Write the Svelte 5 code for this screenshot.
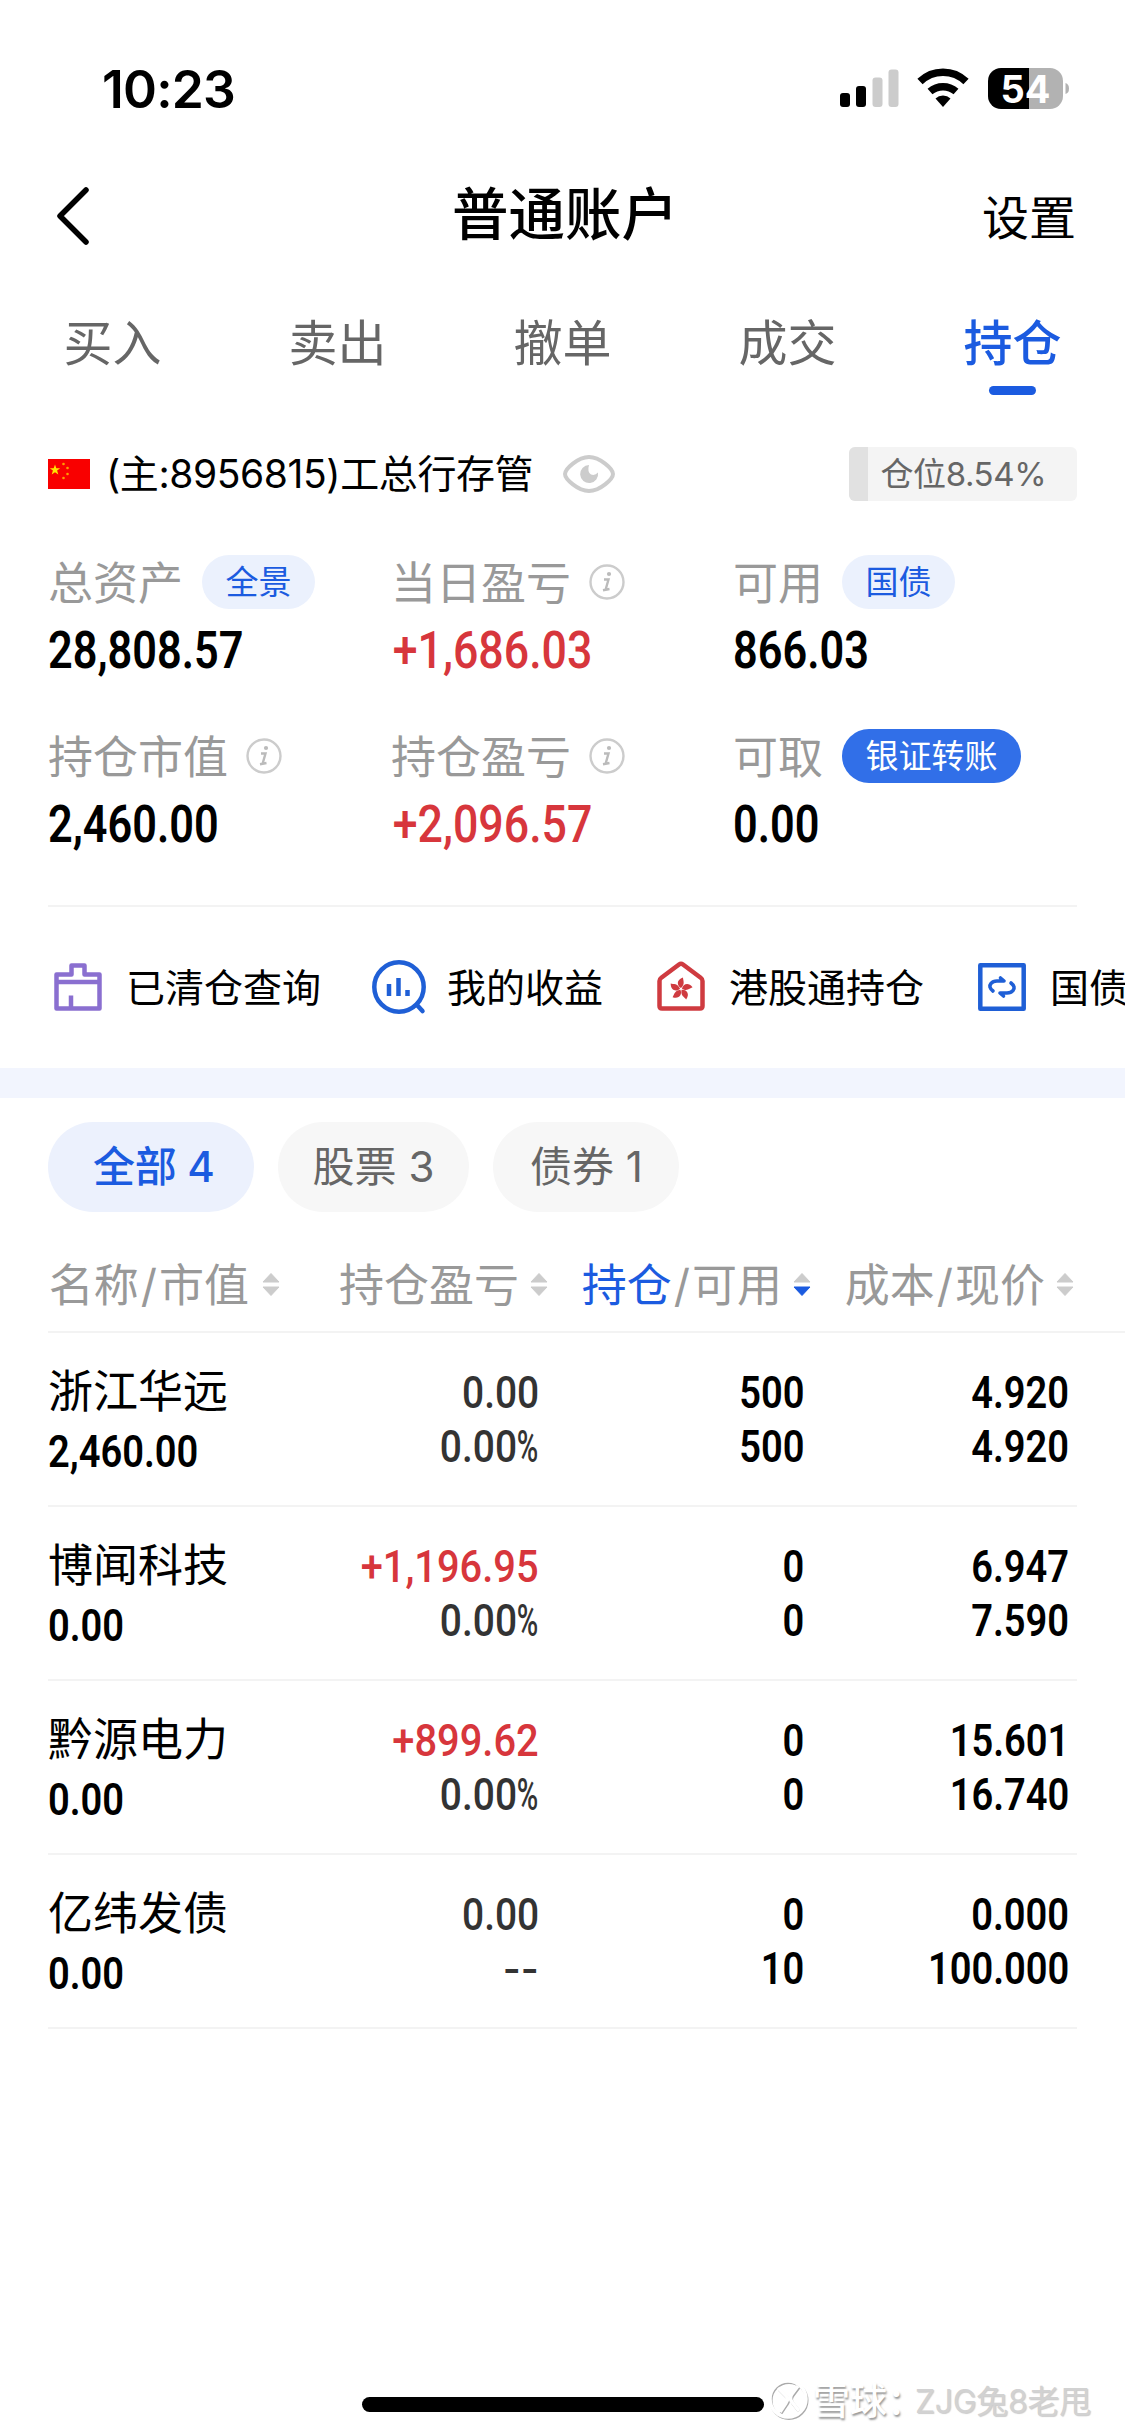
<style>
:global(body) {
	background: #fff;
}

.page {
	position: relative;
	display: flex;
	flex-direction: column;
	width: 1125px;
	height: 2436px;
	overflow: hidden;
	background: #fff;
	color: #000;
	font-family: Inter, "Noto Sans CJK SC", sans-serif;
	font-size: 45px;
	white-space: nowrap;
}

svg {
	display: block;
	flex: none;
}

.status {
	display: flex;
	align-items: center;
	height: 86px;
	padding: 46px 56px 0 102px;
}

.status svg {
	margin-top: 2px;
}

.time {
	flex: 1;
	font-size: 51.5px;
	font-weight: 600;
	letter-spacing: -0.8px;
}

.nav {
	display: grid;
	grid-template-columns: 1fr auto 1fr;
	align-items: center;
	height: 170px;
	padding: 0 49px 0 54px;
}

.nav svg {
	margin-bottom: 2px;
}

.nav h1 {
	margin: 0;
	padding-bottom: 5px;
	font-size: 56.5px;
	font-weight: 500;
	line-height: 80px;
}

.settings {
	padding-bottom: 5px;
	font-size: 47px;
	text-align: right;
}

.tabs {
	display: flex;
	height: 118px;
}

.tab {
	display: flex;
	flex: 1;
	flex-direction: column;
	align-items: center;
	color: #666;
	font-size: 49px;
	line-height: 84px;
}

.tab.active {
	color: #1b5be0;
	font-weight: 500;
}

.tab.active::after {
	content: '';
	width: 47px;
	height: 9px;
	border-radius: 5px;
	background: #1b5be0;
}

.account {
	display: flex;
	align-items: center;
	height: 108px;
	padding: 0 48px;
}

.account-name {
	flex: 1;
	display: flex;
	align-items: center;
	gap: 29px;
	margin-left: 16px;
	font-size: 39px;
	letter-spacing: -0.4px;
}

.account-name span {
	padding-bottom: 6px;
}

.position {
	display: flex;
	width: 228px;
	height: 54px;
	border-radius: 6px;
	overflow: hidden;
	background: #f4f4f4;
	color: #666;
	font-size: 33px;
	line-height: 54px;
	letter-spacing: -0.4px;
}

.position i {
	margin-right: 12px;
	background: #e1e1e1;
}

.stats {
	display: grid;
	grid-template-columns: 343px 342px 1fr;
	margin: 27px 48px 0;
	padding-bottom: 2px;
	border-bottom: 2px solid #f3f3f3;
}

.stat {
	height: 174px;
}

.label {
	display: flex;
	align-items: center;
	height: 54px;
	color: #999;
}

.label span:first-child {
	padding-bottom: 4px;
}

.label svg {
	margin-left: 18px;
}

.pill {
	height: 54px;
	margin-left: 19px;
	padding: 0 23.5px;
	border-radius: 27px;
	background: #ebf1fd;
	color: #1b5be0;
	font-size: 33px;
	line-height: 54px;
}

.pill.solid {
	background: #316fe8;
	color: #fff;
}

.num {
	display: block;
	width: max-content;
	font-family: Roboto, sans-serif;
	font-size: 44px;
	font-weight: 600;
	line-height: 56px;
	transform: scaleX(0.865);
	transform-origin: left;
}

.stat .num {
	font-size: 51.5px;
	line-height: 83px;
	transform: scaleX(0.84);
}

.red {
	color: #d7363c;
	font-weight: 500;
}

.stat .red {
	padding-left: 2px;
	transform: scaleX(0.868);
}

.percent {
	display: inline-block;
	margin-right: -8px;
	transform: scaleX(0.75);
	transform-origin: left;
}

.links {
	display: flex;
	align-items: center;
	gap: 48px;
	height: 161px;
	padding-left: 48px;
	font-size: 39px;
}

.link {
	display: flex;
	align-items: center;
	gap: 18px;
}

.link svg {
	margin-bottom: 1px;
}

.link span {
	padding-bottom: 6px;
}

.band {
	height: 30px;
	background: #f2f5fe;
}

.chips {
	display: flex;
	gap: 24px;
	padding: 24px 48px 0;
}

.chip {
	box-sizing: border-box;
	min-width: 186px;
	height: 90px;
	padding: 0 35px;
	border-radius: 45px;
	background: #f7f7f7;
	color: #666;
	font-size: 42px;
	line-height: 90px;
	text-align: center;
}

.chip.active {
	padding: 0 39px 0 45px;
	background: #ecf1fd;
	color: #1b5be0;
	font-weight: 500;
	letter-spacing: -0.3px;
}

.row {
	display: grid;
	grid-template-columns: 232px 268px 263px 263px;
}

.head {
	height: 93px;
	margin-left: 48px;
	padding-top: 26px;
	border-bottom: 2px solid #f3f3f3;
	color: #999;
}

.head div {
	display: flex;
	align-items: center;
	justify-content: flex-end;
	height: 94px;
}

.head span {
	padding-bottom: 5px;
}

.head svg {
	margin: 0 -1px 0 10px;
}

.head div:first-child svg {
	margin-left: 12px;
}

.head b {
	color: #1b5be0;
	font-weight: 400;
}

.head i {
	margin: 0 2px;
	font-style: normal;
}

.holding {
	height: 140px;
	margin: 0 48px;
	padding-top: 32px;
	border-bottom: 2px solid #f3f3f3;
}

.name {
	height: 59px;
	line-height: 54px;
}

.cell {
	display: flex;
	flex-direction: column;
	align-items: flex-end;
	padding-right: 5px;
}

.cell .num {
	height: 54px;
	transform-origin: right;
}

.cell.profit {
	padding-right: 9px;
	color: #333;
}

.cell.profit .num {
	font-weight: 500;
	transform: scaleX(0.885);
}

.cell.profit .red {
	transform: scaleX(0.905);
}

.cell.amount {
	padding-right: 7px;
}

.profit .none {
	font-family: Inter, sans-serif;
}

.home {
	width: 402px;
	height: 15px;
	margin: auto auto 24px 362px;
	border-radius: 8px;
	background: #000;
}

.watermark {
	position: absolute;
	left: 767px;
	top: 2376px;
	display: flex;
	align-items: center;
	height: 46px;
	color: #fff;
	font-size: 37px;
	font-weight: 500;
	text-shadow: 1px 2px 2px #999;
}

.watermark span {
	width: 102px;
	margin-left: 2px;
}

.watermark small {
	color: #d2d2d2;
	font-size: 32px;
	font-weight: 400;
	text-shadow: 1px 1px 1px #ccc;
	letter-spacing: -0.3px;
}
</style>

<script>
  const tabs = ['买入', '卖出', '撤单', '成交', '持仓']
  const stats = [
    { label: '总资产', pill: '全景', value: '28,808.57' },
    { label: '当日盈亏', info: true, value: '+1,686.03' },
    { label: '可用', pill: '国债', value: '866.03' },
    { label: '持仓市值', info: true, value: '2,460.00' },
    { label: '持仓盈亏', info: true, value: '+2,096.57' },
    { label: '可取', pill: '银证转账', solid: true, value: '0.00' }
  ]
  const chips = ['全部 4', '股票 3', '债券 1']
  const holdings = [
    { name: '浙江华远', value: '2,460.00', profit: '0.00', rate: '0.00', held: '500', usable: '500', cost: '4.920', price: '4.920' },
    { name: '博闻科技', value: '0.00', profit: '+1,196.95', rate: '0.00', held: '0', usable: '0', cost: '6.947', price: '7.590' },
    { name: '黔源电力', value: '0.00', profit: '+899.62', rate: '0.00', held: '0', usable: '0', cost: '15.601', price: '16.740' },
    { name: '亿纬发债', value: '0.00', profit: '0.00', rate: null, held: '0', usable: '10', cost: '0.000', price: '100.000' }
  ]
  const position = 8.54

  let tab = '持仓'
  let chip = '全部 4'
</script>

{#snippet sort(down)}
  <svg width="20" height="26" viewBox="0 0 20 26">
    <path d="M10 1.500 18 10H2Z" fill="#ccc" stroke="#ccc" stroke-linejoin="round" />
    <path d="M10 23.500 18 15H2Z" fill={down ? '#1b5be0' : '#ccc'} stroke={down ? '#1b5be0' : '#ccc'} stroke-linejoin="round" />
  </svg>
{/snippet}

<div class="page">
  <div class="status">
    <span class="time">10:23</span>
    <svg width="230" height="44" viewBox="0 0 230 44">
      <rect x="1" y="25" width="10" height="14" rx="3" />
      <rect x="17" y="18" width="10" height="21" rx="3" />
      <rect x="33.500" y="9.500" width="10" height="29.500" rx="3" fill="#ccc" />
      <rect x="49.500" y="1.500" width="10" height="37.500" rx="3" fill="#ccc" />
      <g fill="none" stroke="#000" stroke-width="7.500">
        <path d="M81 13.500A33 33 0 0 1 127 13.500" />
        <path d="M91 23.500A20 20 0 0 1 117 23.500" />
      </g>
      <path d="M96.500 30.500A11 11 0 0 1 111.500 30.500L104 39Z" />
      <path d="M190 0H211A13 13 0 0 1 224 13V28A13 13 0 0 1 211 41H190Z" fill="#b2b2b2" />
      <path d="M190 0H162A13 13 0 0 0 149 13V28A13 13 0 0 0 162 41H190Z" />
      <path d="M226.500 15Q230 16 230 20.500T226.500 26Z" fill="#b2b2b2" />
      <text x="186.500" y="34.500" fill="#fff" font-size="38" font-weight="700" text-anchor="middle">54</text>
    </svg>
  </div>

  <div class="nav">
    <svg width="36" height="60" viewBox="0 0 36 60">
      <path d="M32 4 6 30 32 56" fill="none" stroke="#000" stroke-width="5.500" stroke-linecap="round" stroke-linejoin="round" />
    </svg>
    <h1>普通账户</h1>
    <span class="settings">设置</span>
  </div>

  <div class="tabs">
    {#each tabs as name}
      <div class="tab {tab === name ? 'active' : ''}">{name}</div>
    {/each}
  </div>

  <div class="account">
    <svg width="42" height="30" viewBox="0 0 42 30">
      <path d="M0 0H42V30H0Z" fill="#f90000" />
      <path d="M7 5.500 8.300 9.300H12.200L9.100 11.600 10.300 15.500 7 13.200 3.700 15.500 4.900 11.600 1.800 9.300H5.700Z" fill="#ffe600" />
      <g fill="#ff9c00">
        <circle cx="15.500" cy="5" r="1.300" />
        <circle cx="19.500" cy="9" r="1.300" />
        <circle cx="19.500" cy="15" r="1.300" />
        <circle cx="15.500" cy="19" r="1.300" />
      </g>
    </svg>
    <div class="account-name">
      <span>(主:8956815)工总行存管</span>
      <svg width="54" height="40" viewBox="0 0 54 40">
        <path d="M3 20C3 15 16 3 27 3S51 15 51 20 38 37 27 37 3 25 3 20Z" fill="none" stroke="#ccc" stroke-width="4" />
        <path d="M27 11Q25 18 29 20.500 33 22 36 18.500A9 9 0 1 1 27 11Z" fill="#ccc" />
      </svg>
    </div>
    <div class="position"><i style="width: {position}%"></i>仓位{position}%</div>
  </div>

  <div class="stats">
    {#each stats as s}
      <div class="stat">
        <div class="label">
          <span>{s.label}</span>
          {#if s.pill}
            <span class="pill {s.solid ? 'solid' : ''}">{s.pill}</span>
          {/if}
          {#if s.info}
            <svg width="36" height="36" viewBox="0 0 36 36">
              <circle cx="18" cy="18" r="16.500" fill="none" stroke="#ccc" stroke-width="2.400" />
              <circle cx="20" cy="10" r="2.100" fill="#bbb" />
              <path d="M15 15.500H19.500L16.500 26M14 26.200 20.500 25" fill="none" stroke="#bbb" stroke-width="2.400" />
            </svg>
          {/if}
        </div>
        <span class="num {s.value[0] === '+' ? 'red' : ''}">{s.value}</span>
      </div>
    {/each}
  </div>

  <div class="links">
    <div class="link">
      <svg width="60" height="60" viewBox="0 0 60 60" fill="none" stroke="#8a6fd0" stroke-width="4.500" stroke-linejoin="round">
        <path d="M8.500 17.500H23.500V8.500H36.500V17.500H51.500V51.500H8.500ZM8.500 25H51.500M23 38.500V51" />
      </svg>
      <span>已清仓查询</span>
    </div>
    <div class="link">
      <svg width="60" height="60" viewBox="0 0 60 60" fill="none" stroke="#1f5fd6" stroke-width="4.500">
        <circle cx="30" cy="30" r="24.700" />
        <path d="M20 27V39M29.500 21V39M38.500 33V39" />
        <path d="M48 48 53.500 54" stroke-linecap="round" />
      </svg>
      <span>我的收益</span>
    </div>
    <div class="link">
      <svg width="60" height="60" viewBox="0 0 60 60">
        <path d="M8.500 24Q8.500 22 10 21L28 7.500Q30 6 32 7.500L50 21Q51.500 22 51.500 24V49Q51.500 51.500 49 51.500H11Q8.500 51.500 8.500 49Z" fill="none" stroke="#cf3b40" stroke-width="4.500" />
        {#each [0, 72, 144, 216, 288] as angle}
          <path d="M30 31C25.500 28.500 25.500 22.500 32 20.500 32 23.500 34.500 27 30 31Z" fill="#cf3b40" transform="rotate({angle} 30 32)" />
        {/each}
      </svg>
      <span>港股通持仓</span>
    </div>
    <div class="link">
      <svg width="60" height="60" viewBox="0 0 60 60" fill="none" stroke="#1f5fd6" stroke-width="4.500" stroke-linejoin="round">
        <rect x="8.300" y="8.300" width="43.400" height="43.400" />
        <g stroke-width="3.600" stroke-linecap="round">
          <path d="M21 34Q16 30 19 26.500 21 24 25 24H32L28.500 21" />
          <path d="M39 26Q44 30 41 33.500 39 36 35 36H28L31.500 39" />
        </g>
      </svg>
      <span>国债</span>
    </div>
  </div>

  <div class="band"></div>

  <div class="chips">
    {#each chips as name}
      <div class="chip {chip === name ? 'active' : ''}">{name}</div>
    {/each}
  </div>

  <div class="row head">
    <div><span>名称<i>/</i>市值</span>{@render sort(false)}</div>
    <div><span>持仓盈亏</span>{@render sort(false)}</div>
    <div><span><b>持仓</b><i>/</i>可用</span>{@render sort(true)}</div>
    <div><span>成本<i>/</i>现价</span>{@render sort(false)}</div>
  </div>

  {#each holdings as h}
    <div class="row holding">
      <div>
        <div class="name">{h.name}</div>
        <span class="num">{h.value}</span>
      </div>
      <div class="cell profit">
        <span class="num {h.profit[0] === '+' ? 'red' : ''}">{h.profit}</span>
        {#if h.rate}
          <span class="num">{h.rate}<span class="percent">%</span></span>
        {:else}
          <span class="num none">--</span>
        {/if}
      </div>
      <div class="cell amount">
        <span class="num">{h.held}</span>
        <span class="num">{h.usable}</span>
      </div>
      <div class="cell">
        <span class="num">{h.cost}</span>
        <span class="num">{h.price}</span>
      </div>
    </div>
  {/each}

  <div class="home"></div>

  <div class="watermark">
    <svg width="44" height="46" viewBox="0 0 44 46" fill="none">
      <g stroke="#aaa" stroke-width="3" transform="translate(1 1.500)">
        <circle cx="21" cy="23" r="18" />
        <path d="M11 12 19 20Q22 23 19 27L13 36M31 10 25 18Q22 22 25 26L32 35" />
      </g>
      <g stroke="#fff" stroke-width="3.500">
        <circle cx="21" cy="23" r="18" />
        <path d="M11 12 19 20Q22 23 19 27L13 36M31 10 25 18Q22 22 25 26L32 35" />
      </g>
    </svg>
    <span>雪球：</span>
    <small>ZJG兔8老甩</small>
  </div>
</div>
